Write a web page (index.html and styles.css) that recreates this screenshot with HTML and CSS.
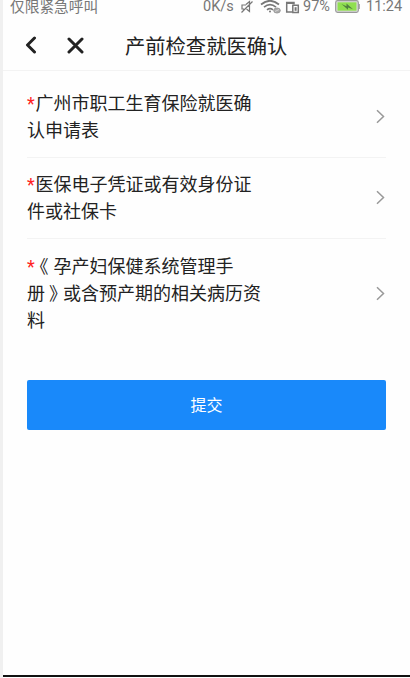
FILE: index.html
```html
<!DOCTYPE html>
<html lang="zh-CN">
<head>
<meta charset="utf-8">
<title>产前检查就医确认</title>
<link rel="stylesheet" href="styles.css">
</head>
<body>
<div class="screen">
  <div class="status">
    <span class="carrier">仅限紧急呼叫</span>
    <span class="speed">0K/s</span>
    <svg class="mute" width="14" height="14" viewBox="0 0 14 14" fill="none" stroke="#777" stroke-width="1.2"><path d="M6 4.500L9.500 1.500V11.500L6.500 9M4 9H2V5H6M1.500 12.500L12.500 1.500"/></svg>
    <svg class="wifi" width="22" height="15" viewBox="0 0 22 15" fill="none" stroke="#777" stroke-width="1.7"><path d="M1 5.500Q10 -2 19 5.500M4 8.200Q10 3.200 16 8.200M7 10.800Q10 8.500 13 10.800"/><circle cx="10" cy="12.500" r="1" fill="#777" stroke="none"/><ellipse cx="17" cy="11.500" rx="3.300" ry="2.500" fill="#aaa" stroke="#999" stroke-width="1"/><path d="M15 12.500l4-2" stroke="#ddd" stroke-width=".8"/></svg>
    <svg class="sim" width="15" height="14" viewBox="0 0 15 14" fill="none" stroke="#777" stroke-width="1.500"><path d="M7 12H1.700V2.500H9V4.500M1.500 3.200H9.500"/><path d="M7.800 5.300h5.500v7.200H7.800z"/><path d="M10.600 7.200v3.600" stroke-width="2"/></svg>
    <span class="percent">97%</span>
    <svg class="battery" width="25" height="13" viewBox="0 0 25 13"><rect x=".7" y=".7" width="22.600" height="11.600" rx="1.800" fill="#ddd" stroke="#999" stroke-width="1.200"/><rect x="2.500" y="2.300" width="19" height="8.400" fill="#90df50"/><path d="M23.500 4h1.300v5h-1.300z" fill="#999"/><path d="M6.500 4l5 2.300V3.500l6.500 5.700-5-1.800v2.400z" fill="#508040"/></svg>
    <span class="clock">11:24</span>
  </div>
  <header class="navbar">
    <svg class="back" width="12" height="18" viewBox="0 0 12 18"><path d="M9.500 2L2.500 9l7 7"/></svg>
    <svg class="close" width="17" height="17" viewBox="0 0 17 17"><path d="M2 2l13 13M15 2L2 15"/></svg>
    <h1>产前检查就医确认</h1>
  </header>
  <main>
    <div class="row">
      <p><span class="star">*</span>广州市职工生育保险就医确<br>认申请表</p>
      <svg class="arrow" width="9" height="15" viewBox="0 0 9 15"><path d="M1 1.200l6.500 6.300L1 13.800"/></svg>
    </div>
    <div class="row">
      <p><span class="star">*</span>医保电子凭证或有效身份证<br>件或社保卡</p>
      <svg class="arrow" width="9" height="15" viewBox="0 0 9 15"><path d="M1 1.200l6.500 6.300L1 13.800"/></svg>
    </div>
    <div class="row">
      <p><span class="star">*</span><span class="mark">《</span>孕产妇保健系统管理手<br>册<span class="mark">》</span>或含预产期的相关病历资<br>料</p>
      <svg class="arrow" width="9" height="15" viewBox="0 0 9 15"><path d="M1 1.200l6.500 6.300L1 13.800"/></svg>
    </div>
    <button class="submit" type="button">提交</button>
  </main>
</div>
</body>
</html>
```
FILE: styles.css
```css
* { box-sizing: border-box; }
body {
  margin: 0;
  padding-left: 3px;
  background: linear-gradient(to right, #f0f0f0 3px, #fff 3px);
  font-family: Roboto, "Noto Sans CJK SC", sans-serif;
  color: #222;
}
.screen {
  height: 677px;
  overflow: hidden;
  border-bottom: 2px solid #111;
  background: #fefefe;
}
.status {
  display: flex;
  align-items: center;
  height: 20px;
  padding-left: 7px;
  padding-bottom: 7px;
  font-size: 14.5px;
  line-height: 18px;
  color: #777;
  white-space: nowrap;
}
.status svg { flex: none; }
.status span { padding-top: 1px; }
.carrier { width: 193px; font-size: 14.7px; }
.speed { width: 37px; }
.wifi { margin-left: 6px; }
.sim { margin-left: 3px; }
.percent { width: 28px; margin-left: 3px; }
.battery { margin-left: 4px; }
.clock { margin-left: 6px; }
.navbar {
  display: flex;
  align-items: center;
  height: 51px;
  padding-left: 22px;
  border-bottom: 1px solid #f3f3f3;
}
.navbar svg {
  fill: none;
  stroke: #222;
  stroke-width: 3;
  stroke-linecap: round;
  stroke-linejoin: round;
}
.close { margin-left: 30px; }
.navbar h1 {
  margin: 0 0 0 41px;
  padding-top: 3px;
  font-size: 20.3px;
  font-weight: 400;
  line-height: 30px;
}
main { padding: 5px 24px 0; }
.row {
  display: flex;
  align-items: center;
  justify-content: space-between;
  height: 81.5px;
  border-bottom: 1px solid #f3f3f3;
}
.row:nth-child(3) { height: 108px; border-bottom: 0; }
.row p {
  margin: 0;
  padding-top: 1px;
  font-size: 18px;
  line-height: 27px;
  white-space: nowrap;
}
.star { display: inline-block; width: 8.5px; color: #f22; }
.mark {
  margin: 0 5px 0 4px;
  font-feature-settings: "halt";
  text-spacing-trim: space-all;
}
.arrow {
  margin-right: 1px;
  fill: none;
  stroke: #999;
  stroke-width: 1.5;
}
.submit {
  display: block;
  width: 100%;
  height: 50px;
  margin-top: 33px;
  padding: 2px 0 0;
  border: 0;
  border-radius: 2px;
  background: #1989fa;
  color: #fff;
  font: 16px/48px Roboto, "Noto Sans CJK SC", sans-serif;
}
```
